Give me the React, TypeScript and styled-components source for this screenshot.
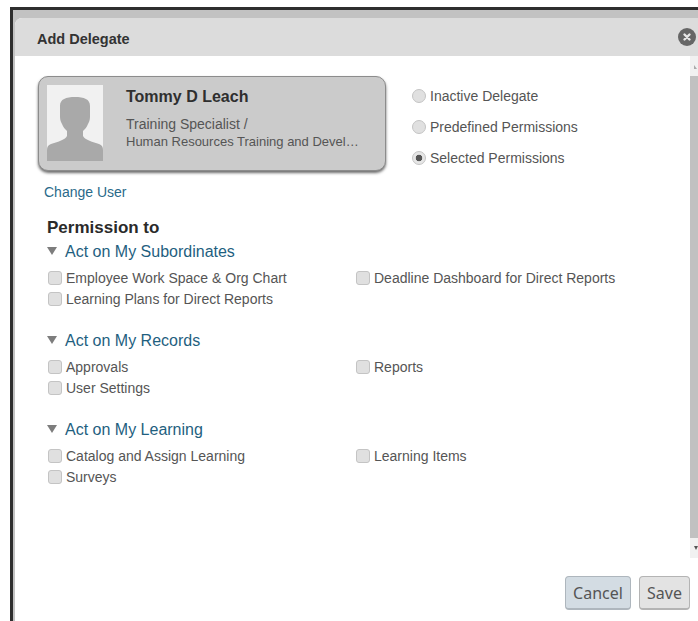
import React from "react";
import styled, { createGlobalStyle } from "styled-components";

const Global = createGlobalStyle`
  html, body { margin: 0; padding: 0; background: #fff; height: 100%; overflow: hidden; }
  body { font-family: "Liberation Sans", Arial, sans-serif; }
`;

const Backdrop = styled.div`
  margin: 7px 0 0 10px;
  height: 614px;
  box-sizing: border-box;
  border-top: 3px solid #2e2e2e;
  border-left: 3px solid #2e2e2e;
  background: #c2c2c2;
  padding: 8px 0 0 2px;
`;

const Dialog = styled.div`
  position: relative;
  height: 603px;
  background: #fff;
  border-top-left-radius: 7px;
  display: flex;
  flex-direction: column;
  overflow: hidden;
`;

const Header = styled.div`
  height: 38px;
  flex: none;
  background: #dcdcdc;
  padding: 4px 0 0 22px;
  box-sizing: border-box;
  display: flex;
  align-items: center;
  font-size: 14.5px;
  font-weight: bold;
  color: #333;
`;

const CloseButton = styled.button`
  position: absolute;
  top: 10px;
  right: 2px;
  width: 18px;
  height: 18px;
  padding: 0;
  border: 0;
  border-radius: 50%;
  background: #666;
  display: flex;
  align-items: center;
  justify-content: center;
`;

const Middle = styled.div`
  height: 502px;
  flex: none;
  display: flex;
`;

const Content = styled.div`
  flex: 1;
  min-width: 0;
  padding: 20px 0 0 23px;
`;

const TopRow = styled.div`
  display: flex;
  align-items: flex-start;
`;

const UserCard = styled.div`
  width: 348px;
  height: 95px;
  box-sizing: border-box;
  border: 1px solid #8c8c8c;
  border-radius: 10px;
  background: #cbcbcb;
  box-shadow: 0 2px 3px #6b6b6b;
  padding: 8px 0 0 8px;
  display: flex;
`;

const Avatar = styled.div`
  width: 56px;
  height: 76px;
  flex: none;
  background: #f1f1f1;
`;

const UserText = styled.div`
  margin-left: 23px;
  color: #555;
`;

const UserName = styled.div`
  font-size: 16px;
  font-weight: bold;
  line-height: 18px;
  margin-top: 3px;
  color: #2f2f2f;
`;

const UserRole = styled.div`
  font-size: 14px;
  line-height: 16px;
  margin-top: 10px;
`;

const UserDept = styled.div`
  font-size: 13px;
  line-height: 15px;
  margin-top: 2px;
`;

const Modes = styled.div`
  margin: 11px 0 0 26px;
  display: flex;
  flex-direction: column;
  gap: 13px;
`;

const Mode = styled.label`
  display: flex;
  align-items: center;
  height: 18px;
  font-size: 14px;
  color: #555;
`;

const RadioDot = styled.span<{ $on?: boolean }>`
  width: 14px;
  height: 14px;
  box-sizing: border-box;
  border: 1px solid #c4c4c4;
  border-radius: 50%;
  background: ${(p) => (p.$on ? "radial-gradient(circle, #555 0 3px, #e6e6e6 3.6px)" : "#e0e0e0")};
  margin: 0 4px 0 0;
`;

const ChangeUser = styled.a`
  display: block;
  margin: 13px 0 0 6px;
  font-size: 14px;
  line-height: 16px;
  color: #2a6a8a;
`;

const Title = styled.h2`
  margin: 18px 0 0 9px;
  font-size: 17px;
  line-height: 20px;
  font-weight: bold;
  color: #2a2a2a;
`;

const Section = styled.section`
  margin: 0 0 0 9px;
  & + & { margin-top: 21px; }
`;

const SectionHead = styled.div`
  display: flex;
  align-items: center;
  height: 20px;
  margin-top: 4px;
  font-size: 16px;
  color: #1f5f7f;
`;

const Caret = styled.span`
  width: 0;
  height: 0;
  border-left: 5px solid transparent;
  border-right: 5px solid transparent;
  border-top: 8px solid #7d7d7d;
  margin: -3px 8px 0 0;
`;

const Options = styled.div`
  display: grid;
  grid-template-columns: 308px 1fr;
  grid-auto-rows: 21.5px;
  margin-top: 5px;
`;

const Option = styled.label`
  display: flex;
  align-items: center;
  padding-left: 1px;
  font-size: 14px;
  color: #555;
`;

const Box = styled.span`
  width: 12px;
  height: 12px;
  border: 1px solid #c4c4c4;
  border-radius: 3px;
  background: #e0e0e0;
  margin-right: 4px;
  flex: none;
`;

const Scrollbar = styled.div`
  width: 8px;
  flex: none;
  display: flex;
  flex-direction: column;
  background: #f1f1f1;
`;

const Arrow = styled.div`
  height: 20px;
  flex: none;
  display: flex;
  align-items: center;
  justify-content: flex-start;
`;

const Thumb = styled.div`
  flex: 1;
  background: #c1c1c1;
`;

const Footer = styled.div`
  flex: 1;
  display: flex;
  justify-content: flex-end;
  gap: 8px;
  padding: 18px 8px 0 0;
`;

const Btn = styled.button<{ $primary?: boolean }>`
  height: 34px;
  box-sizing: border-box;
  padding: 0;
  width: ${(p) => (p.$primary ? 66 : 51)}px;
  border: 1px solid ${(p) => (p.$primary ? "#aeb6bd" : "#b4b4b4")};
  border-bottom-width: 2px;
  border-radius: 4px;
  background: ${(p) => (p.$primary ? "#d3dce3" : "#e3e3e3")};
  font-family: "Noto Sans", sans-serif;
  font-size: 16px;
  color: #555;
`;

const groups = [
  { name: "Act on My Subordinates", items: ["Employee Work Space & Org Chart", "Deadline Dashboard for Direct Reports", "Learning Plans for Direct Reports"] },
  { name: "Act on My Records", items: ["Approvals", "Reports", "User Settings"] },
  { name: "Act on My Learning", items: ["Catalog and Assign Learning", "Learning Items", "Surveys"] },
];

export default function App() {
  return (
    <>
      <Global />
      <Backdrop>
        <Dialog>
          <Header>Add Delegate</Header>
          <CloseButton aria-label="Close">
            <svg width="10" height="10" viewBox="0 0 10 10">
              <path d="M2.5 2.5l5 5M7.5 2.5l-5 5" stroke="#e8e8e8" strokeWidth="2.4" strokeLinecap="round" />
            </svg>
          </CloseButton>
          <Middle>
            <Content>
              <TopRow>
                <UserCard>
                  <Avatar>
                    <svg width="56" height="76" viewBox="0 0 56 76">
                      <path
                        fill="#a9a9a9"
                        d="M28 12c-9 0-15 2-15 9v11c0 3 1 5 2 7 1 3 3 5 5 7v5c-2 4-10 6-16 8-3 1-4 3-4 6v11h56V65c0-3-1-5-4-6-6-2-14-4-16-8v-5c2-2 4-4 5-7 1-2 2-4 2-7V21c0-7-6-9-15-9z"
                      />
                    </svg>
                  </Avatar>
                  <UserText>
                    <UserName>Tommy D Leach</UserName>
                    <UserRole>Training Specialist /</UserRole>
                    <UserDept>Human Resources Training and Devel…</UserDept>
                  </UserText>
                </UserCard>
                <Modes>
                  <Mode><RadioDot />Inactive Delegate</Mode>
                  <Mode><RadioDot />Predefined Permissions</Mode>
                  <Mode><RadioDot $on />Selected Permissions</Mode>
                </Modes>
              </TopRow>
              <ChangeUser>Change User</ChangeUser>
              <Title>Permission to</Title>
              {groups.map((g) => (
                <Section key={g.name}>
                  <SectionHead><Caret />{g.name}</SectionHead>
                  <Options>
                    {g.items.map((item) => (
                      <Option key={item}><Box />{item}</Option>
                    ))}
                  </Options>
                </Section>
              ))}
            </Content>
            <Scrollbar>
              <Arrow>
                <svg width="8" height="8" viewBox="0 0 8 8"><path d="M4 3l3 4H4z" fill="#aaa" /></svg>
              </Arrow>
              <Thumb />
              <Arrow>
                <svg width="8" height="8" viewBox="0 0 8 8"><path d="M4 2h4L6 6z" fill="#555" /></svg>
              </Arrow>
            </Scrollbar>
          </Middle>
          <Footer>
            <Btn $primary>Cancel</Btn>
            <Btn>Save</Btn>
          </Footer>
        </Dialog>
      </Backdrop>
    </>
  );
}
